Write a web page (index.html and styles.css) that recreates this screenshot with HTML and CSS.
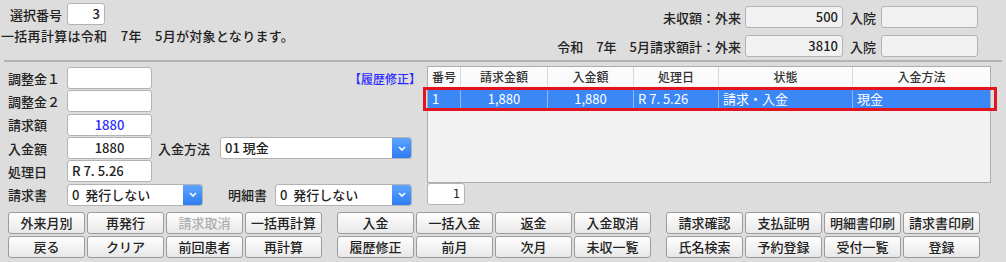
FILE: index.html
```html
<!DOCTYPE html>
<html lang="ja">
<head>
<meta charset="utf-8">
<title>入金</title>
<link rel="stylesheet" href="styles.css">
</head>
<body>
<div class="top">
  <div class="top-left">
    <div class="sel-row"><span class="lbl">選択番号</span><div class="box num w38">3</div></div>
    <div class="msg">一括再計算は令和　7年　5月が対象となります。</div>
  </div>
  <div class="top-right">
    <span class="rlbl">未収額：外来</span><div class="box ro num">500</div><span class="nlbl">入院</span><div class="box ro"></div>
    <span class="rlbl">令和　7年　5月請求額計：外来</span><div class="box ro num">3810</div><span class="nlbl">入院</span><div class="box ro"></div>
  </div>
</div>
<div class="sep"></div>
<div class="main">
  <div class="left">
    <div class="frow"><span class="flbl">調整金１</span><div class="box fbox"></div><span class="hist">【履歴修正】</span></div>
    <div class="frow"><span class="flbl">調整金２</span><div class="box fbox"></div></div>
    <div class="frow"><span class="flbl">請求額</span><div class="box fbox center blue">1880</div></div>
    <div class="frow"><span class="flbl">入金額</span><div class="box fbox center">1880</div><span class="mlbl">入金方法</span>
      <div class="sel w192"><span class="sel-text">01 現金</span><span class="sel-btn"><svg width="8" height="5" viewBox="0 0 8 5"><path d="M1 1l3 3 3-3" stroke="#fff" stroke-width="1.6" fill="none"/></svg></span></div>
    </div>
    <div class="frow"><span class="flbl">処理日</span><div class="box fbox">R 7. 5.26</div></div>
    <div class="frow"><span class="flbl">請求書</span>
      <div class="sel w136"><span class="sel-text">0&nbsp; 発行しない</span><span class="sel-btn"><svg width="8" height="5" viewBox="0 0 8 5"><path d="M1 1l3 3 3-3" stroke="#fff" stroke-width="1.6" fill="none"/></svg></span></div>
      <span class="dlbl">明細書</span>
      <div class="sel w137"><span class="sel-text">0&nbsp; 発行しない</span><span class="sel-btn"><svg width="8" height="5" viewBox="0 0 8 5"><path d="M1 1l3 3 3-3" stroke="#fff" stroke-width="1.6" fill="none"/></svg></span></div>
    </div>
  </div>
  <div class="right">
    <div class="grid">
      <div class="thead">
        <span>番号</span><span>請求金額</span><span>入金額</span><span>処理日</span><span>状態</span><span>入金方法</span>
      </div>
      <div class="trow">
        <span class="l">1</span><span>1,880</span><span>1,880</span><span class="l">R 7. 5.26</span><span class="l">請求・入金</span><span class="l">現金</span>
      </div>
    </div>
    <div class="highlight"></div>
    <div class="box page">1</div>
  </div>
</div>
<div class="btns">
  <div class="bgroup">
    <button class="btn">外来月別</button><button class="btn">再発行</button><button class="btn dis">請求取消</button><button class="btn">一括再計算</button>
    <button class="btn">戻る</button><button class="btn">クリア</button><button class="btn">前回患者</button><button class="btn">再計算</button>
  </div>
  <div class="bgroup">
    <button class="btn">入金</button><button class="btn">一括入金</button><button class="btn">返金</button><button class="btn">入金取消</button>
    <button class="btn">履歴修正</button><button class="btn">前月</button><button class="btn">次月</button><button class="btn">未収一覧</button>
  </div>
  <div class="bgroup">
    <button class="btn">請求確認</button><button class="btn">支払証明</button><button class="btn">明細書印刷</button><button class="btn">請求書印刷</button>
    <button class="btn">氏名検索</button><button class="btn">予約登録</button><button class="btn">受付一覧</button><button class="btn">登録</button>
  </div>
</div>
</body>
</html>
```

FILE: styles.css
```css
html, body {
  margin: 0;
  padding: 0;
}
body {
  width: 1006px;
  height: 262px;
  overflow: hidden;
  background: #dddddd;
  font-family: "Noto Sans CJK JP", "Noto Sans", sans-serif;
  font-size: 13px;
  font-weight: 500;
  color: #222;
}
.top {
  display: flex;
  justify-content: space-between;
  height: 60px;
  padding: 3px 28px 0 0;
  box-sizing: border-box;
}
.top-left {
  display: flex;
  flex-direction: column;
}
.sel-row {
  display: flex;
  align-items: center;
  height: 22px;
  padding-left: 10px;
}
.sel-row .lbl {
  width: 57px;
}
.msg {
  height: 22px;
  line-height: 22px;
  margin-top: 0;
  padding-left: 1px;
  letter-spacing: 0.3px;
}
.box {
  height: 22px;
  box-sizing: border-box;
  border: 1px solid #b3b3b3;
  border-radius: 3px;
  background: #fff;
  line-height: 20px;
  padding: 0 4px;
  white-space: nowrap;
}
.box.ro {
  background: #f1f1f1;
}
.num {
  text-align: right;
}
.w38 {
  width: 38px;
}
.top-right {
  display: grid;
  grid-template-columns: auto 98px auto 97px;
  column-gap: 4px;
  row-gap: 1px;
  align-items: center;
}
.rlbl {
  text-align: right;
}
.nlbl {
  margin: 0 1px 0 3px;
}
.sep {
  border-top: 2px solid #b4b4b4;
  margin: 0 4px;
}
.main {
  display: flex;
  padding: 5px 0 0 8px;
}
.left {
  width: 419px;
  display: flex;
  flex-direction: column;
  gap: 1.35px;
}
.frow {
  display: flex;
  align-items: center;
  height: 22px;
}
.flbl {
  width: 59px;
}
.fbox {
  width: 85px;
}
.center {
  text-align: center;
}
.blue {
  color: #2b2bff;
}
.hist {
  margin-left: auto;
  margin-right: 6px;
  color: #2b2bff;
  font-size: 12px;
}
.mlbl {
  margin-left: 6px;
  width: 62px;
}
.dlbl {
  margin-left: 25px;
  width: 47px;
}
.sel {
  display: flex;
  height: 22px;
  box-sizing: border-box;
  border: 1px solid #b3b3b3;
  border-radius: 3px;
  background: #fff;
  overflow: hidden;
}
.w192 { width: 192px; }
.w136 { width: 136px; }
.w137 { width: 137px; }
.sel-text {
  flex: 1;
  padding-left: 4px;
  line-height: 20px;
  white-space: nowrap;
}
.sel-btn {
  width: 19px;
  background: linear-gradient(#5ea4ff, #2e7bf1);
  display: flex;
  align-items: center;
  justify-content: center;
}
.right {
  position: relative;
  margin-top: -1px;
  display: flex;
  flex-direction: column;
}
.grid {
  width: 564px;
  height: 117px;
  box-sizing: border-box;
  border: 1px solid #adadad;
  background: #f2f2f2;
}
.thead, .trow {
  display: grid;
  grid-template-columns: 33px 87px 86px 85px 134px 137px;
}
.thead {
  height: 19px;
  line-height: 19px;
  background: #fbfbfb;
  font-size: 12px;
  color: #333;
  text-align: center;
}
.thead span {
  border-right: 1px solid #d9d9d9;
}
.thead span:last-child {
  border-right: none;
}
.trow {
  margin-top: 4px;
  height: 18px;
  line-height: 18px;
  background: #3b87f6;
  color: #fff;
  text-align: center;
  font-weight: 400;
}
.trow span {
  border-right: 1px solid #8fb8f5;
  white-space: nowrap;
}
.trow span:last-child {
  border-right: none;
}
.trow .l {
  text-align: left;
  padding-left: 4px;
}
.highlight {
  position: absolute;
  left: -4px;
  top: 21px;
  width: 574px;
  height: 24px;
  box-sizing: border-box;
  border: 3px solid #e2141f;
}
.page {
  width: 38px;
  text-align: right;
  font-family: "DejaVu Sans Mono", monospace;
  font-size: 12px;
  font-weight: 400;
}
.btns {
  display: flex;
  gap: 15px;
  padding-left: 8px;
  margin-top: 6px;
}
.bgroup {
  display: grid;
  grid-template-columns: repeat(4, 77px);
  gap: 2px;
}
.btn {
  height: 22px;
  padding: 0;
  border: 1px solid #9c9c9c;
  border-radius: 3px;
  background: linear-gradient(#fefefe, #e8e8e8);
  font-family: inherit;
  font-size: 13px;
  font-weight: 500;
  color: #222;
  line-height: 20px;
  white-space: nowrap;
}
.btn.dis {
  color: #aeaeae;
}
```
